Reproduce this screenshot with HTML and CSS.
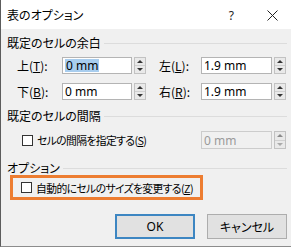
FILE: index.html
```html
<!DOCTYPE html>
<html lang="ja">
<head>
<meta charset="utf-8">
<link rel="stylesheet" href="styles.css">
</head>
<body>
<div class="window">
  <div class="titlebar">
    <span class="title">表のオプション</span>
    <span class="help">?</span>
    <span class="close"><svg width="11" height="11" viewBox="0 0 11 11"><path d="M0.5 0.5 L10.5 10.5 M10.5 0.5 L0.5 10.5" stroke="#222" stroke-width="1" fill="none"/></svg></span>
  </div>
  <div class="content">
    <div class="heading h1"><span>既定のセルの余白</span><span class="rule"></span></div>
    <div class="row r1">
      <span class="label lab1">上(<u>T</u>):</span>
      <span class="input w1"><span class="sel">0 mm</span></span>
      <span class="spin"><span class="up"></span><span class="down"></span></span>
      <span class="label lab2">左(<u>L</u>):</span>
      <span class="input w2">1.9 mm</span>
      <span class="spin"><span class="up"></span><span class="down"></span></span>
    </div>
    <div class="row r2">
      <span class="label lab1">下(<u>B</u>):</span>
      <span class="input w1">0 mm</span>
      <span class="spin"><span class="up"></span><span class="down"></span></span>
      <span class="label lab2">右(<u>R</u>):</span>
      <span class="input w2">1.9 mm</span>
      <span class="spin"><span class="up"></span><span class="down"></span></span>
    </div>
    <div class="heading h2"><span>既定のセルの間隔</span><span class="rule"></span></div>
    <div class="checkrow">
      <span class="box"></span>
      <span class="cbtext">セルの間隔を指定する(<u>S</u>)</span>
      <span class="group">
        <span class="input w2 disabled">0 mm</span>
        <span class="spin disabled"><span class="up"></span><span class="down"></span></span>
      </span>
    </div>
    <div class="heading h3"><span>オプション</span><span class="rule"></span></div>
    <div class="highlight">
      <span class="box"></span>
      <span class="cbtext">自動的にセルのサイズを変更する(<u>Z</u>)</span>
    </div>
    <div class="buttons">
      <span class="btn ok">OK</span>
      <span class="btn">キャンセル</span>
    </div>
  </div>
</div>
</body>
</html>
```
FILE: styles.css
```css
html, body {
  margin: 0;
  padding: 0;
}
body {
  width: 291px;
  height: 248px;
  overflow: hidden;
  background: #ffffff;
  font-family: "Noto Sans CJK JP", sans-serif;
  font-size: 12px;
  color: #000;
  font-feature-settings: "palt";
}
.window {
  height: 246px;
  border-left: 1px solid #5c5c5c;
  border-bottom: 1px solid #8c8c8c;
  background: #f0f0f0;
  display: flex;
  flex-direction: column;
}
.titlebar {
  height: 29px;
  flex: none;
  background: #ffffff;
  display: flex;
  align-items: center;
  padding-left: 6px;
}
.title {
  flex: 1;
  font-size: 12px;
  line-height: 14px;
  margin-top: 1px;
}
.help {
  font-family: "Noto Sans", sans-serif;
  font-size: 12px;
  color: #222;
  margin-right: 33px;
  margin-top: 1px;
}
.close {
  display: flex;
  margin-right: 13px;
  margin-top: 1px;
}
.content {
  flex: 1;
  display: flex;
  flex-direction: column;
}
.heading {
  display: flex;
  align-items: center;
  padding-left: 6px;
  padding-right: 4px;
  height: 16px;
  line-height: 16px;
  gap: 3px;
}
.heading .rule {
  flex: 1;
  height: 1px;
  background: #dcdcdc;
}
.h1 { margin-top: 6px; }
.h2 { margin-top: 8px; }
.h3 { margin-top: 12px; height: 14px; }
.row {
  display: flex;
  align-items: stretch;
  height: 17px;
  padding-left: 16px;
}
.r1 { margin-top: 6px; }
.r2 { margin-top: 9px; }
.label {
  display: flex;
  align-items: center;
  line-height: 14px;
}
.lab1 { width: 45px; }
.lab2 { width: 42px; margin-left: 13px; }
.input {
  box-sizing: border-box;
  height: 17px;
  background: #fff;
  border: 1px solid #b4b4b4;
  font-family: "Noto Sans", sans-serif;
  font-size: 12px;
  line-height: 15px;
  padding-left: 2px;
  display: flex;
  align-items: center;
}
.w1 { width: 70px; }
.w2 { width: 71px; }
.sel {
  background: #a8cdee;
  padding: 0 1px;
  line-height: 13px;
}
.spin {
  box-sizing: border-box;
  width: 12px;
  height: 17px;
  margin-left: 2px;
  display: flex;
  flex-direction: column;
  border: 1px solid #c2c2c2;
  background: #f4f4f4;
}
.spin .up, .spin .down {
  flex: 1;
  display: flex;
  align-items: center;
  justify-content: center;
  background: #e9e9e9;
}
.spin .up { border-bottom: 1px solid #d0d0d0; }
.spin .up::before {
  content: "";
  border-left: 3px solid transparent;
  border-right: 3px solid transparent;
  border-bottom: 3px solid #333;
}
.spin .down::before {
  content: "";
  border-left: 3px solid transparent;
  border-right: 3px solid transparent;
  border-top: 3px solid #333;
}
.spin.disabled .up::before { border-bottom-color: #8a8a8a; }
.spin.disabled .down::before { border-top-color: #aaaaaa; }
.input.disabled {
  background: #f0f0f0;
  border-color: #cccccc;
  color: #9a9a9a;
  height: 18px;
}
.spin.disabled { height: 18px; }
.checkrow {
  display: flex;
  align-items: center;
  height: 18px;
  margin-top: 7px;
  padding-left: 21px;
  padding-right: 5px;
}
.box {
  box-sizing: border-box;
  width: 11px;
  height: 11px;
  border: 1px solid #333;
  background: #fff;
  flex: none;
}
.cbtext {
  margin-left: 4px;
  line-height: 14px;
  font-size: 10.8px;
  letter-spacing: -0.6px;
  white-space: nowrap;
}
.group {
  margin-left: auto;
  display: flex;
}
.highlight {
  box-sizing: border-box;
  margin-left: 9px;
  width: 193px;
  height: 25px;
  border: 3px solid #ed7d31;
  display: flex;
  align-items: center;
  padding-left: 8px;
}
.buttons {
  display: flex;
  justify-content: flex-end;
  gap: 12px;
  padding-right: 4px;
  margin-top: 14px;
}
.btn {
  box-sizing: border-box;
  width: 80px;
  height: 25px;
  background: #e1e1e1;
  border: 1px solid #adadad;
  display: flex;
  align-items: center;
  justify-content: center;
  font-size: 12px;
}
.btn.ok {
  border: 2px solid #3d86c2;
  font-family: "Noto Sans", sans-serif;
}
```
